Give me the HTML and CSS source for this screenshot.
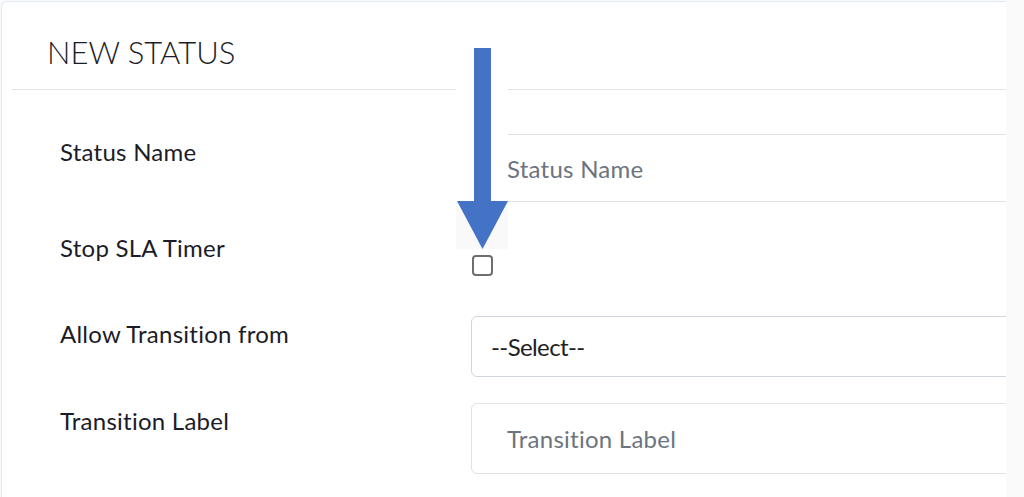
FILE: index.html
```html
<!DOCTYPE html>
<html lang="en">
<head>
    <meta charset="UTF-8">
    <meta name="viewport" content="width=device-width, initial-scale=1.0">
    <title>New Status</title>
    <link rel="stylesheet" href="styles.css">
</head>
<body>

    <div class="card">
        <div class="card-header">
            <h3>NEW STATUS</h3>
        </div>

        <form class="status-form">
            <div class="form-row row-name">
                <label for="status-name">Status Name</label>
                <input type="text" id="status-name" class="form-control" placeholder="Status Name">
            </div>

            <div class="form-row row-check">
                <label for="stop-sla">Stop SLA Timer</label>
                <div class="control">
                    <input type="checkbox" id="stop-sla" class="check">
                </div>
            </div>

            <div class="form-row row-select">
                <label for="transition-from">Allow Transition from</label>
                <select id="transition-from" class="form-control select">
                    <option>--Select--</option>
                </select>
            </div>

            <div class="form-row row-label">
                <label for="transition-label">Transition Label</label>
                <input type="text" id="transition-label" class="form-control" placeholder="Transition Label">
            </div>
        </form>

        <!-- annotation arrow pasted over the form -->
        <div class="callout-arrow">
            <svg width="52" height="219" viewBox="0 0 52 219">
                <rect x="0" y="171" width="52" height="48" fill="#f9f9f9"/>
                <rect x="18" y="18" width="17" height="157" fill="#4472c4"/>
                <polygon points="1,171 52,171 26.5,219" fill="#4472c4"/>
            </svg>
        </div>
    </div>

</body>
</html>
```

FILE: styles.css
```css
* {
    box-sizing: border-box;
}

body {
    margin: 0;
    background-color: #fafafa;
    font-family: Lato, "Open Sans", sans-serif;
    color: #1c1c28;
}

.card {
    position: relative;
    margin: 1px 18px 0 1px;
    background: white;
    border: 1px solid #dfe8f4;
    border-right: none;
    border-bottom: none;
    border-radius: 6px 0 0 0;
    overflow: hidden;
    min-height: 520px;
}

.card-header {
    margin-left: 10px;
    padding: 32px 0 18px 35px;
    border-bottom: 1px solid #e3e3e3;
}

.card-header h3 {
    margin: 0;
    font-size: 31px;
    line-height: 37px;
    font-weight: 300;
    color: #1c1c28;
}

.status-form {
    margin-top: 44px;
    padding-left: 58px;
}

.form-row {
    display: grid;
    grid-template-columns: 411px 1fr;
    margin-bottom: 26px;
}

.form-row label {
    padding-top: 4px;
    font-size: 24px;
    line-height: 28px;
    letter-spacing: 0.25px;
}

.form-control {
    width: calc(100% + 60px);
    font-family: inherit;
    font-size: 24px;
    letter-spacing: 0.25px;
    color: #1e1e24;
    background: white;
    border: 1px solid #e2e2e2;
    border-radius: 6px;
    outline: none;
}

.form-control::placeholder {
    color: #6c7480;
}

.row-name .form-control {
    height: 68px;
    padding: 0 0 0 35px;
}

.row-check {
    height: 62px;
}

.row-check label {
    padding-top: 6px;
}

.check {
    appearance: none;
    width: 21px;
    height: 21px;
    margin: 27px 0 0 1px;
    border: 2px solid #6e6e6e;
    border-radius: 4px;
    background: white;
}

.select {
    appearance: none;
    height: 61px;
    padding: 0 0 0 19px;
    border-color: #cfd5dd;
    letter-spacing: -0.6px;
}

.row-label .form-control {
    height: 71px;
    padding: 0 0 0 35px;
}

.callout-arrow {
    position: absolute;
    left: 454px;
    top: 28px;
    width: 52px;
    height: 219px;
    background: white;
}

.callout-arrow svg {
    display: block;
}
```
